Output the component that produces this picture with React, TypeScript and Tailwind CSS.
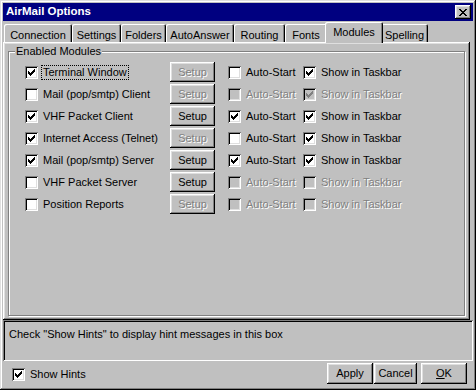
import React from 'react';

type Mod = {
  name: string;
  on: boolean;
  setup: boolean;
  auto: boolean;
  autoOn: boolean;
  show: boolean;
  showOn: boolean;
};

const modules: Mod[] = [
  { name: 'Terminal Window', on: true, setup: false, auto: true, autoOn: false, show: true, showOn: true },
  { name: 'Mail (pop/smtp) Client', on: false, setup: false, auto: false, autoOn: false, show: false, showOn: true },
  { name: 'VHF Packet Client', on: true, setup: true, auto: true, autoOn: true, show: true, showOn: true },
  { name: 'Internet Access (Telnet)', on: true, setup: false, auto: true, autoOn: false, show: true, showOn: true },
  { name: 'Mail (pop/smtp) Server', on: true, setup: true, auto: true, autoOn: true, show: true, showOn: true },
  { name: 'VHF Packet Server', on: false, setup: true, auto: false, autoOn: false, show: false, showOn: false },
  { name: 'Position Reports', on: false, setup: false, auto: false, autoOn: false, show: false, showOn: false },
];

const tabs = [
  { label: 'Connection', w: 'w-[68px]' },
  { label: 'Settings', w: 'w-[49px]' },
  { label: 'Folders', w: 'w-[45px]' },
  { label: 'AutoAnswer', w: 'w-[68px]' },
  { label: 'Routing', w: 'w-[51px]' },
  { label: 'Fonts', w: 'w-[42px]' },
  { label: 'Modules', w: 'w-[58px]', active: true },
  { label: 'Spelling', w: 'w-[47px]' },
];

const raised =
  'shadow-[inset_-1px_-1px_0_#000,inset_1px_1px_0_#fff,inset_-2px_-2px_0_#808080,inset_2px_2px_0_#dfdfdf]';
const grayText = 'text-[#808080] [text-shadow:1px_1px_0_#fff]';

function Check({ checked, disabled }: { checked: boolean; disabled?: boolean }) {
  return (
    <span
      className={`block w-[13px] h-[13px] shrink-0 shadow-[inset_1px_1px_0_#808080,inset_-1px_-1px_0_#fff,inset_2px_2px_0_#000,inset_-2px_-2px_0_#dfdfdf] ${
        disabled ? 'bg-[#c0c0c0]' : 'bg-white'
      }`}
    >
      {checked && (
        <svg width="13" height="13" viewBox="0 0 13 13" shapeRendering="crispEdges">
          <path
            d="M3 5h1v3h-1z M4 6h1v3h-1z M5 7h1v3h-1z M6 6h1v3h-1z M7 5h1v3h-1z M8 4h1v3h-1z M9 3h1v3h-1z"
            fill={disabled ? '#808080' : '#000'}
          />
        </svg>
      )}
    </span>
  );
}

function Button({ label, disabled, className = '' }: { label: React.ReactNode; disabled?: boolean; className?: string }) {
  return (
    <div
      className={`flex items-center justify-center bg-[#c0c0c0] ${raised} ${
        disabled ? grayText : 'text-black'
      } ${className}`}
    >
      {label}
    </div>
  );
}

function ModuleRow({ m, focused }: { m: Mod; focused?: boolean }) {
  return (
    <div className="flex items-center h-[22px]">
      <div className="flex items-center w-[145px]">
        <Check checked={m.on} />
        <span
          className={`ml-[4px] px-[1px] leading-[13px] ${
            focused ? 'outline outline-1 outline-dotted outline-black' : 'outline-none'
          }`}
        >
          {m.name}
        </span>
      </div>
      <Button label="Setup" disabled={!m.setup} className="w-[45px] h-[20px]" />
      <div className="flex items-center w-[75px] ml-[13px]">
        <Check checked={m.autoOn} disabled={!m.auto} />
        <span className={`ml-[5px] ${m.auto ? '' : grayText}`}>Auto-Start</span>
      </div>
      <div className="flex items-center">
        <Check checked={m.showOn} disabled={!m.show} />
        <span className={`ml-[5px] ${m.show ? '' : grayText}`}>Show in Taskbar</span>
      </div>
    </div>
  );
}

export default function App() {
  return (
    <div className="w-[476px] h-[390px] bg-[#c0c0c0] font-['Liberation_Sans',Arial,sans-serif] text-[11px] text-black overflow-hidden">
      <div className="h-full p-[3px] flex flex-col shadow-[inset_-1px_-1px_0_#000,inset_1px_1px_0_#dfdfdf,inset_-2px_-2px_0_#808080,inset_2px_2px_0_#fff]">
        {/* title bar */}
        <div className="h-[18px] bg-[#000080] flex items-center justify-between pl-[3px] pr-[2px]">
          <span className="text-white font-bold text-[11.5px]">AirMail Options</span>
          <div className={`w-[16px] h-[14px] bg-[#c0c0c0] flex items-center justify-center ${raised}`}>
            <svg width="8" height="7" viewBox="0 0 8 7" shapeRendering="crispEdges">
              <path
                d="M0 0h2v1h-2z M6 0h2v1h-2z M1 1h2v1h-2z M5 1h2v1h-2z M2 2h4v1h-4z M3 3h2v1h-2z M2 4h4v1h-4z M1 5h2v1h-2z M5 5h2v1h-2z M0 6h2v1h-2z M6 6h2v1h-2z"
                fill="#000"
              />
            </svg>
          </div>
        </div>

        {/* tabs */}
        <div className="mt-[1px] h-[20px] flex pl-[1px] relative z-10">
          {tabs.map((t) =>
            t.active ? (
              <div
                key={t.label}
                className={`${t.w} -mx-[2px] h-[21px] bg-[#c0c0c0] rounded-t-[2px] flex justify-center pt-[2px] shadow-[inset_1px_1px_0_#fff,inset_-1px_0_0_#000,inset_-2px_0_0_#808080] relative z-10`}
              >
                {t.label}
              </div>
            ) : (
              <div
                key={t.label}
                className={`${t.w} mt-[2px] h-[18px] rounded-t-[2px] flex justify-center pt-[3px] shadow-[inset_1px_1px_0_#fff,inset_-1px_0_0_#000,inset_-2px_0_0_#808080]`}
              >
                {t.label}
              </div>
            )
          )}
        </div>

        {/* panel */}
        <div className={`mr-[3px] h-[278px] ${raised} pt-[9px] px-[5px] pb-[4px]`}>
          <div className="relative h-full border border-[#808080] shadow-[1px_1px_0_#fff,inset_1px_1px_0_#fff]">
            <span className="absolute -top-[7px] left-[6px] bg-[#c0c0c0] px-[1px] leading-[13px]">
              Enabled Modules
            </span>
            <div className="pt-[9px] pl-[16px]">
              {modules.map((m, i) => (
                <ModuleRow key={m.name} m={m} focused={i === 0} />
              ))}
            </div>
          </div>
        </div>

        {/* hint box */}
        <div className="h-[41px] pl-[6px] pt-[6px] shadow-[inset_1px_1px_0_#808080,inset_-1px_-1px_0_#fff,inset_2px_2px_0_#000]">
          Check "Show Hints" to display hint messages in this box
        </div>

        {/* bottom row */}
        <div className="flex-1 flex items-center pl-[9px] pr-[6px]">
          <Check checked />
          <span className="ml-[5px]">Show Hints</span>
          <div className="ml-auto flex gap-[1px] -mt-[1px]">
            <Button label="Apply" className="w-[46px] h-[21px]" />
            <Button label="Cancel" className="w-[43px] h-[21px]" />
            <Button label={<span><u>O</u>K</span>} className="w-[46px] h-[21px] ml-[3px]" />
          </div>
        </div>
      </div>
    </div>
  );
}
